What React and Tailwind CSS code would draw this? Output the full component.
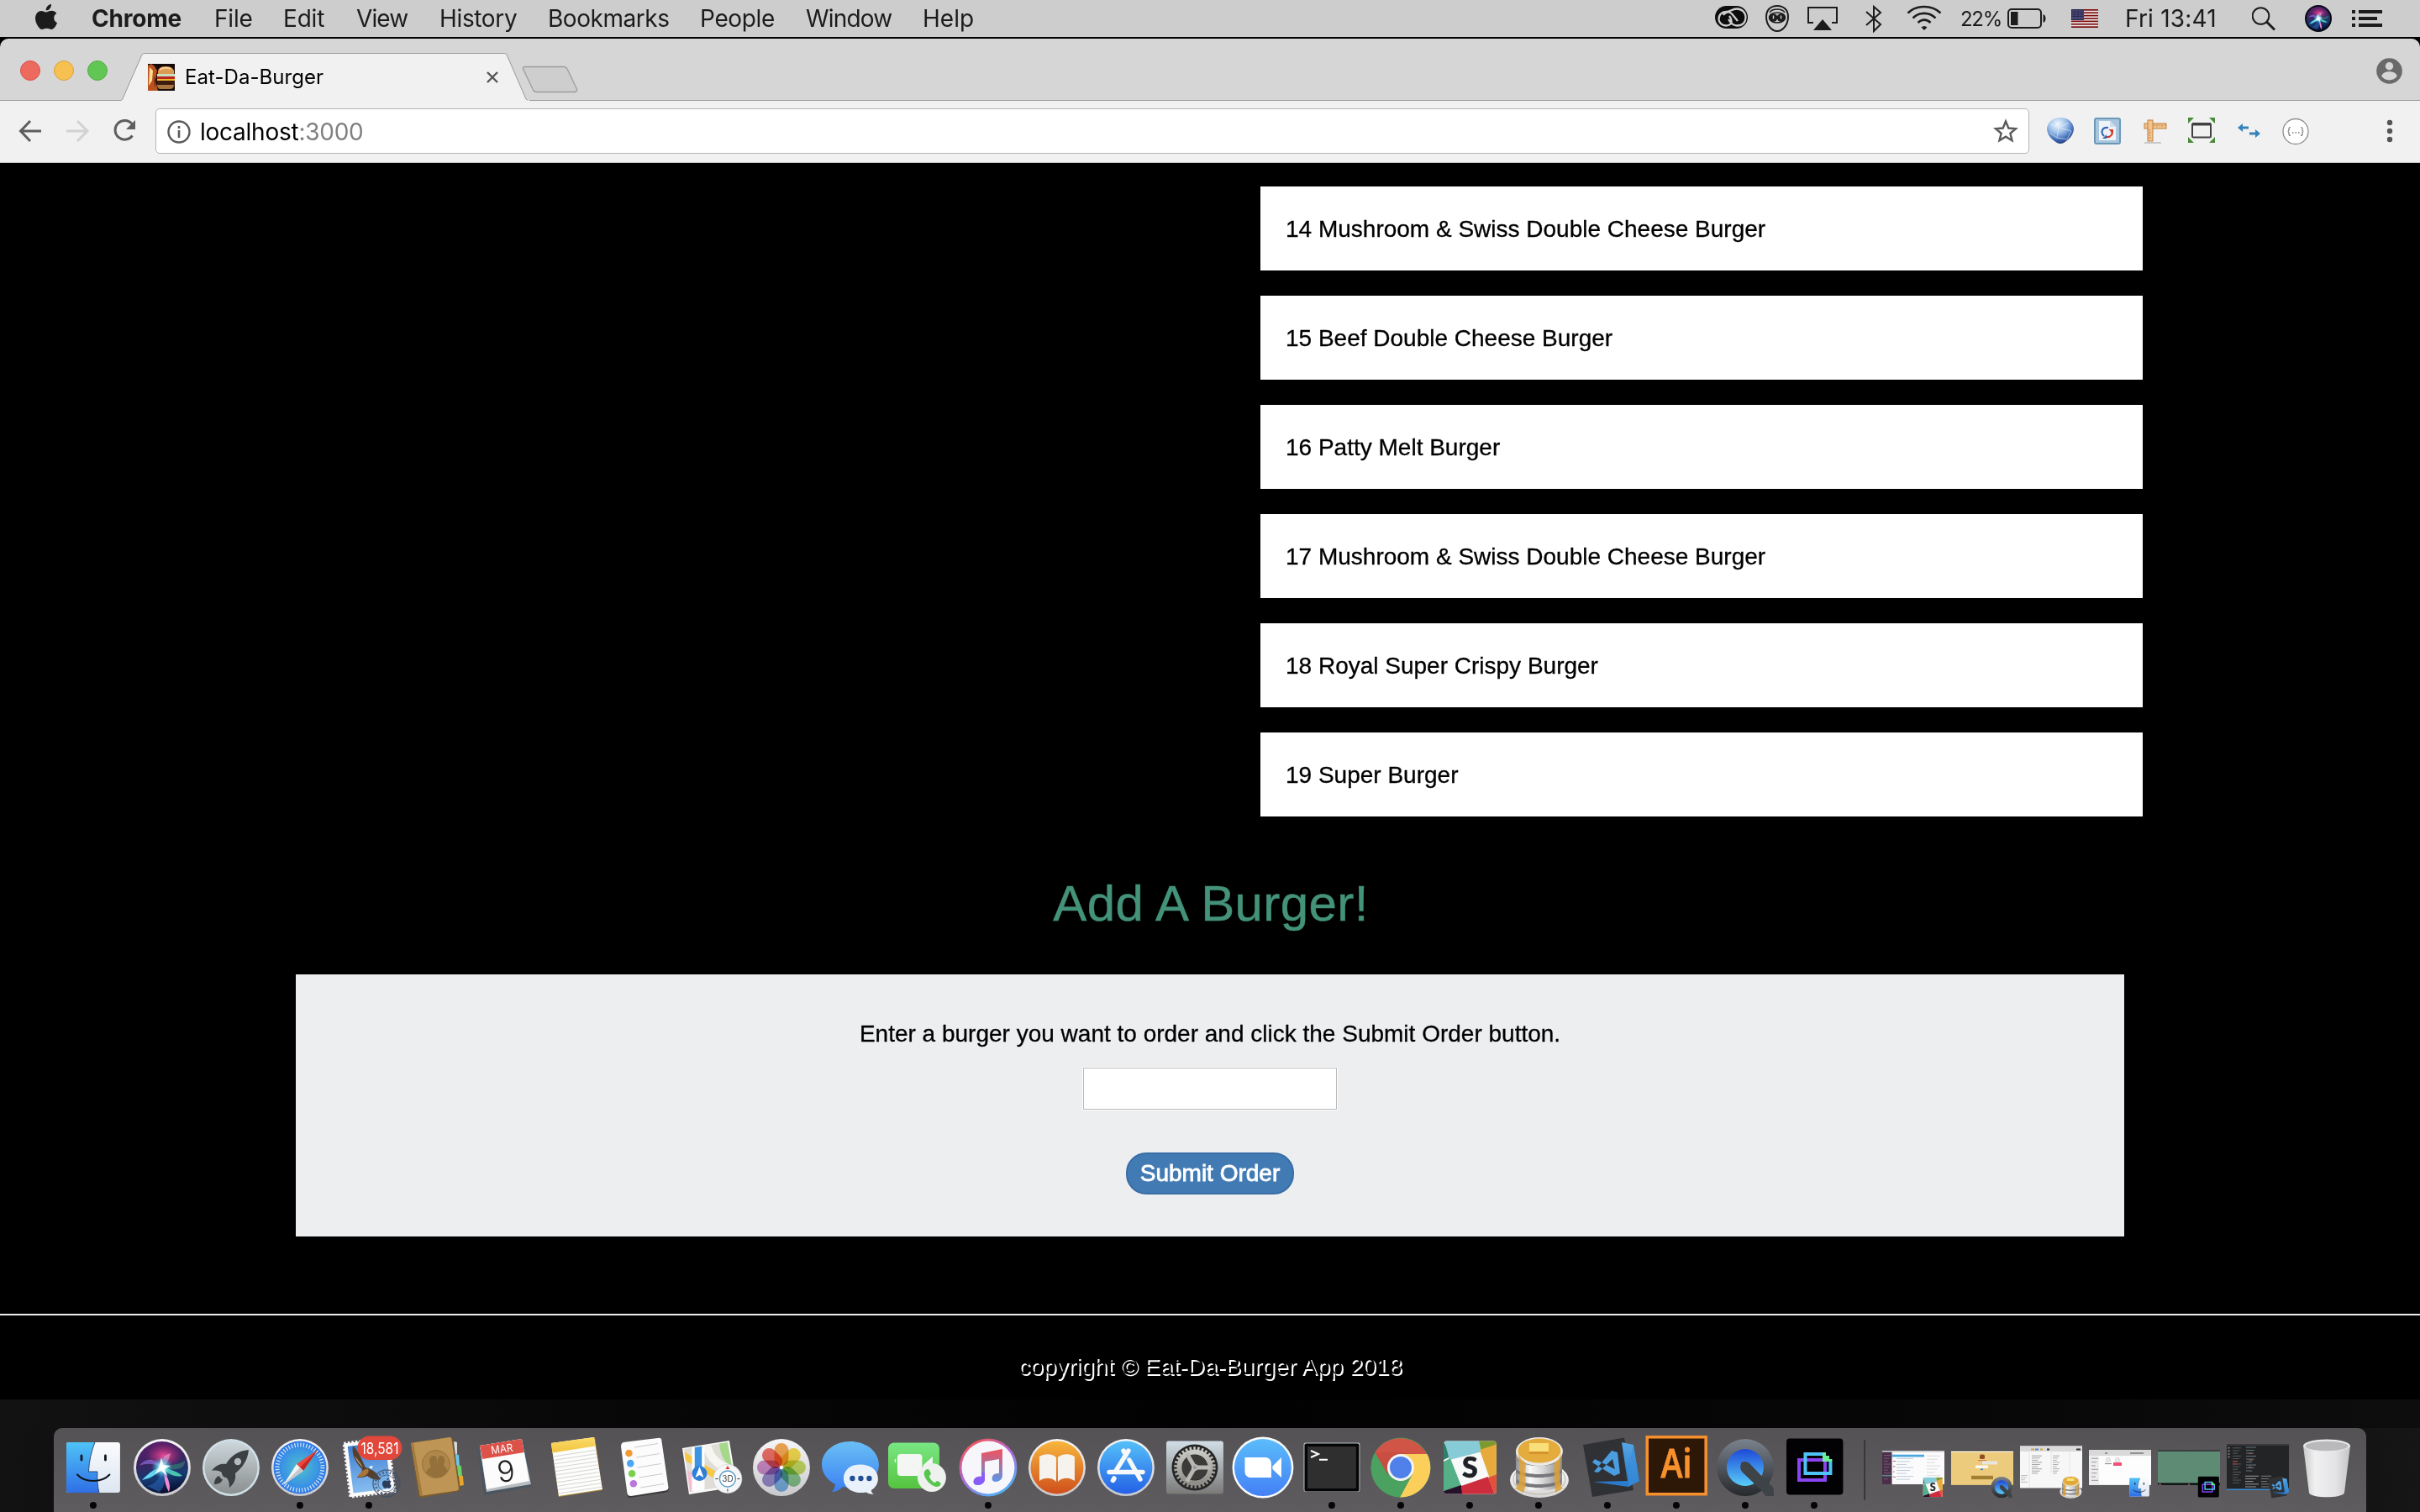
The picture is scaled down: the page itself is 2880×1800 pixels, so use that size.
import React from "react";

const menuItems = [
  ["Chrome", "w-[146px] font-bold tracking-[-0.2px]"],
  ["File", "w-[82px] tracking-[-0.2px]"],
  ["Edit", "w-[87px] tracking-[-0.2px]"],
  ["View", "w-[99px] tracking-[-0.9px]"],
  ["History", "w-[129px] tracking-[-0.35px]"],
  ["Bookmarks", "w-[181px] tracking-[-0.45px]"],
  ["People", "w-[126px] tracking-[-0.35px]"],
  ["Window", "w-[139px] tracking-[-0.8px]"],
  ["Help", "w-[60px]"],
];

const burgers = [
  "14 Mushroom & Swiss Double Cheese Burger",
  "15 Beef Double Cheese Burger",
  "16 Patty Melt Burger",
  "17 Mushroom & Swiss Double Cheese Burger",
  "18 Royal Super Crispy Burger",
  "19 Super Burger",
];

const Stop = ({ at, c, o = 1 }) => <stop offset={at} stopColor={c} stopOpacity={o} />;

/* Gradients shared by the icons */
function Defs() {
  const v = (id, a, b) => (
    <linearGradient id={id} x1="0" y1="0" x2="0" y2="1">
      <Stop at="0" c={a} />
      <Stop at="1" c={b} />
    </linearGradient>
  );
  return (
    <svg className="absolute h-0 w-0" aria-hidden="true">
      <defs>
        {v("ring", "#f6f6f8", "#c9c9cd")}
        {v("finderL", "#4fc3f7", "#2f6fe6")}
        {v("finderR", "#fafbfd", "#dde6f2")}
        {v("launch", "#cdd8dc", "#8a8f8f")}
        {v("sky", "#3f7ed0", "#86bdf0")}
        {v("books", "#f8b63c", "#cf4f1c")}
        {v("store", "#55c0f8", "#2460e6")}
        {v("zoomg", "#5bbcfa", "#4480f6")}
        {v("msg", "#6abff5", "#3a80f3")}
        {v("face", "#79e783", "#55c43f")}
        {v("prefs", "#d2dee6", "#7a7a78")}
        {v("gear", "#c9c9c5", "#8f8d88")}
        {v("musicNote", "#f4505c", "#4a9df6")}
        {v("vs", "#55a8e6", "#2573c4")}
        {v("qtRing", "#7a828d", "#26292c")}
        {v("qtBlue", "#1e49d8", "#59cdf9")}
        {v("notesTop", "#fbdc68", "#f2c340")}
        {v("plate", "#ffffff", "#d6d6d6")}
        <linearGradient id="musicRing" x1="0.2" y1="0" x2="0.8" y2="1">
          <Stop at="0" c="#f7564a" />
          <Stop at="0.45" c="#b565d8" />
          <Stop at="1" c="#43bdfb" />
        </linearGradient>
        <linearGradient id="metal" x1="0" x2="1" y1="0" y2="0">
          <Stop at="0" c="#8f8f8f" />
          <Stop at="0.3" c="#fafafa" />
          <Stop at="0.6" c="#d5d5d5" />
          <Stop at="1" c="#8a8a8a" />
        </linearGradient>
        <linearGradient id="trash" x1="0" x2="1" y1="0" y2="0">
          <Stop at="0" c="#c9c9cb" />
          <Stop at="0.25" c="#f0f0f1" />
          <Stop at="0.7" c="#e3e3e5" />
          <Stop at="1" c="#c4c4c6" />
        </linearGradient>
        <radialGradient id="safari" cx="0.5" cy="0.5" r="0.55">
          <Stop at="0" c="#4fc0c9" />
          <Stop at="0.6" c="#3b96e3" />
          <Stop at="1" c="#2c6ee8" />
        </radialGradient>
        <linearGradient id="siriBg" x1="0.3" y1="0" x2="0.5" y2="1">
          <Stop at="0" c="#5a1e6a" />
          <Stop at="0.4" c="#3a2560" />
          <Stop at="0.7" c="#153a72" />
          <Stop at="1" c="#0a0d2c" />
        </linearGradient>
        <radialGradient id="siriPink">
          <Stop at="0" c="#f04a98" />
          <Stop at="1" c="#c0287a" o={0} />
        </radialGradient>
        <radialGradient id="siriCyan">
          <Stop at="0" c="#ffffff" />
          <Stop at="0.4" c="#7fe6f5" o={0.8} />
          <Stop at="1" c="#2a9ad0" o={0} />
        </radialGradient>
        <radialGradient id="globe" cx="0.4" cy="0.25" r="0.75">
          <Stop at="0" c="#f2f8ff" />
          <Stop at="0.45" c="#9dbfe8" />
          <Stop at="0.8" c="#3f6cb8" />
          <Stop at="1" c="#24407f" />
        </radialGradient>
      </defs>
    </svg>
  );
}

/* ---------- Dock icons, each drawn round the centre 0,0 ---------- */

const Finder = () => (
  <g>
    <rect x="-32" y="-30" width="64" height="60" rx="3" fill="url(#finderR)" />
    <path d="M-29-30H2C-2-20-5-8-5.500 5H5C4.500 14 5 22 7 30H-29a3 3 0 0 1-3-3V-27a3 3 0 0 1 3-3Z" fill="url(#finderL)" />
    <path d="M2-30C-2-20-5-8-5.500 5H5C4.500 14 5 22 7 30" fill="none" stroke="#2b4a78" strokeWidth="1" />
    <path d="M-14-14v5M14.500-14v5" stroke="#10141c" strokeWidth="2.800" strokeLinecap="round" />
    <path d="M-19 8.500C-10 18.500 10 18.500 19.500 8.500" fill="none" stroke="#10141c" strokeWidth="2" strokeLinecap="round" />
  </g>
);

const SiriArt = () => (
  <g>
    <circle r="31" fill="url(#siriBg)" />
    <ellipse cx="2" cy="-14" rx="22" ry="15" fill="url(#siriPink)" />
    <path d="M0 0C-10-14-22-10-27-2C-18-6-8-4 0 0Z" fill="#8a6ad8" opacity=".7" />
    <path d="M-24 15C-14 4-6 1 0-1C-4 8-14 13-24 15Z" fill="#62d8f2" />
    <path d="M0 0C8-4 18-2 27-8C28 0 18 6 0 0Z" fill="#35706f" opacity=".8" />
    <path d="M0 0C10 2 20 6 24 10C16 12 6 8 0 0Z" fill="#55e0b8" opacity=".85" />
    <path d="M1 0C4 8 12 20 8 29C4 22 2 12 1 0Z" fill="#f08ad0" />
    <path d="M0 0C-2-8 0-14 10-17C8-9 6-4 0 0Z" fill="#dfa8d8" opacity=".6" />
    <path d="M-18 22C-6 20-2 10 0 0C6 14 2 26-4 29Z" fill="#2a66b8" opacity=".6" />
    <circle r="13" fill="url(#siriCyan)" />
    <path d="M-1-12L1.500-3L10 -2L3 2L6 10L-1 4L-9 8L-4 0Z" fill="#fff" opacity=".9" />
  </g>
);

const Siri = () => (
  <g>
    <circle r="34" fill="url(#ring)" />
    <SiriArt />
  </g>
);

const Launchpad = () => (
  <g>
    <circle r="34" fill="#cfe0e6" />
    <circle r="31.500" fill="url(#launch)" />
    <path d="M21-21C8-20-1-13-6-4C-13-5-19-2-23 4C-17 3-14 4-11 6C-11 9-9 12-6 12C-3 14-2 18-2 24C4 19 6 14 5 7C14 0 20-9 21-21Z" fill="#3c4043" />
    <circle cx="8" cy="-7" r="4.200" fill="#b4bcbf" />
    <path d="M-14 10C-18 11-20 15-20 20C-15 20-11 18-10 14C-12 14-13 12-14 10Z" fill="#3c4043" />
  </g>
);

const Safari = () => (
  <g>
    <circle r="34" fill="url(#ring)" />
    <circle r="31.500" fill="url(#safari)" />
    <circle r="27" fill="none" stroke="#e3f0fa" strokeWidth="5" strokeDasharray="1.100 2.434" />
    <path d="M21-21L4 4L-4-4Z" fill="#f0463c" />
    <path d="M21-21L4 4L0 0Z" fill="#c22a25" />
    <path d="M-20 21L-4-4L4 4Z" fill="#f4f4f2" />
    <path d="M-20 21L4 4L0 0Z" fill="#c6c8ca" />
  </g>
);

const Mail = () => (
  <g>
    <g transform="rotate(-7)">
      <rect x="-26" y="-32" width="53" height="64" fill="#fbfbfb" />
      <rect x="-26" y="-32" width="53" height="64" fill="none" stroke="#fbfbfb" strokeWidth="3.500" strokeDasharray="2.400 2.200" />
      <rect x="-22" y="-28" width="45" height="56" fill="url(#sky)" />
    </g>
    <path d="M-19-26C-11-18-8-8-4 0C4 2 10 6 14 14C8 16 2 13-2 10C-6 12-10 12-14 12C-10 8-8 6-8 2C-16-6-21-16-19-26Z" fill="#54402c" />
    <path d="M-17-14C-12-8-9-4-7 0C-10-2-15-8-17-14Z" fill="#b79c78" />
    <path d="M-14 11C-9 5-5 1-1 2C2 5-4 13-14 11Z" fill="#a8743a" />
    <path d="M0-1l5-1l-2 4Z" fill="#fff" />
    <g fill="none" stroke="#3e4f68" opacity=".75">
      <circle cx="21" cy="19" r="16" strokeWidth="1.500" />
      <circle cx="21" cy="19" r="10" strokeWidth="1" />
      <circle cx="21" cy="19" r="13" strokeWidth="3" strokeDasharray="2 2.300" />
    </g>
    <g transform="translate(16 13) scale(.42)" fill="#2d3e58"><AppleShape /></g>
    <rect x="-13.500" y="-37.500" width="53" height="28.500" rx="14.200" fill="#e2473c" />
    <text x="13" y="-16" textAnchor="middle" fill="#fff" className="font-['Inter',sans-serif] text-[19px]" textLength="45" lengthAdjust="spacingAndGlyphs">18,581</text>
  </g>
);

function AppleShape() {
  return (
    <g>
      <path d="M12.500 7.500C14.500 7.500 16.500 5.800 19.500 5.800C21.800 5.800 24 7 25.300 8.900C20.700 11.500 21.500 18 26 20C25 23.300 22.200 28 19.200 28C17 28 16.300 26.800 13.700 26.800C11 26.800 10.100 28 8 28C4.600 28 0 20.800 0 14.800C0 9.200 3.700 5.900 7.300 5.900C9.600 5.900 11.300 7.500 12.500 7.500Z" />
      <path d="M12.700 5.500C12.400 1.900 15.500-1.700 19-2C19.300 1.900 16.300 5.500 12.700 5.500Z" />
    </g>
  );
}

const Contacts = () => (
  <g transform="translate(-1 0)">
    <path d="M20-31l4 1v14l-2 1Z" fill="#dcdcdc" />
    <path d="M22-16l4 1l1 13h-4Z" fill="#6ec6e8" />
    <path d="M24-3l5 1l1 12h-5Z" fill="#6fd06a" />
    <path d="M26 10l5 0l1 11l-5 1Z" fill="#e8a52e" />
    <path d="M-31-28Q-31-30-29-30L16-36Q18-36 18.500-34L28 26Q28 28 26 28.500L-19 36Q-22 36-22 33Z" fill="#7d5c2c" />
    <path d="M-31-29L15-36Q17-36 17.500-34L26 25Q26 27 24 27.500L-20 34Z" fill="#bf9556" />
    <path d="M-31-29L-28-29.500L-17 33.500L-20 34Z" fill="#a47b3f" />
    <circle cx="-1" cy="-4" r="16.500" fill="#b0874a" stroke="#94703a" strokeWidth="1" />
    <path d="M-13 6C-12 2-8 1-7-1C-10-5-10-14-4-14C0-14 1-10 0-4C2-6 0-14 5-14C10-14 10-6 8-3C9 0 12 0 13 4C8 14-6 14-13 6Z" fill="#94703a" />
  </g>
);

const Calendar = () => (
  <g>
    <path d="M-34-23L22-32L31 23L-26 33Z" fill="#4a5662" />
    <path d="M-31-26L19-34L30 20L-23 29Z" fill="#b9bcc0" />
    <path d="M-31-26L19-34L28 16L-23 26Z" fill="#fcfcfc" />
    <path d="M-31-26L19-34L22-18L-28-10Z" fill="#dc5148" />
    <g transform="rotate(-8)" textAnchor="middle" className="font-['Inter',sans-serif]">
      <text x="-1.500" y="-18" fill="#fff" className="text-[13px]" textLength="26" lengthAdjust="spacingAndGlyphs">MAR</text>
      <text x="-0.500" y="17" fill="#222" fontWeight="300" className="text-[35px]">9</text>
    </g>
  </g>
);

const Notes = () => (
  <g>
    <path d="M-28-29L24-36L33 27L-19 35Z" fill="#b58f36" />
    <path d="M-28-29L23-36L33 26L-19 34Z" fill="#fdfdfb" />
    <path d="M-28-29L23-36L24.500-25.500L-26.500-17.500Z" fill="url(#notesTop)" />
    {[0, 1, 2, 3, 4, 5, 6, 7, 8, 9, 10].map((i) => (
      <path key={i} d={`M${-25.500 + i * 0.65} ${-13 + i * 4.4}l51-7.800`} stroke="#cfd0d0" strokeWidth=".9" />
    ))}
  </g>
);

const Reminders = () => (
  <g>
    <path d="M-25-27L18-34Q21-35 22 -31L30 25Q30 29 27 29.500L-16 36Q-19 36-19.500 33Z" fill="#2b2b2d" opacity=".7" />
    <path d="M-24-30L17-35Q21-36 21.500-32L29.500 23Q30 27 26 27.500L-15 34Q-19 34-19.500 31L-27-25Q-27-29-24-30Z" fill="#fcfcfd" />
    {["#f39a35", "#4aa7f0", "#7cd04c", "#b878de"].map((c, i) => (
      <g key={c}>
        <circle cx={-17.500 + i * 1.8} cy={-17 + i * 12.1} r="4.300" fill={c} />
        <path d={`M${-9 + i * 1.8} ${-12 + i * 12}l28-4.500`} stroke="#c9c9cb" strokeWidth="1" />
      </g>
    ))}
    <path d="M-11-24l28-4.500" stroke="#c9c9cb" strokeWidth="1" />
  </g>
);

const Maps = () => (
  <g>
    <path d="M-36-23L20-32L29 23L-28 32Z" fill="#fafafa" />
    <clipPath id="mapClip"><path d="M-34-22L18-30L27 21L-27 29Z" /></clipPath>
    <g clipPath="url(#mapClip)">
      <rect x="-40" y="-40" width="80" height="80" fill="#dfddd6" />
      <path d="M-36 0L-18 10L-18 34H-36Z" fill="#f2bfcf" />
      <path d="M-12-34H8C8-8 20 0 32 2V-40Z" fill="#a6d88c" />
      <path d="M-8-34C-6-10 10 2 34 4" fill="none" stroke="#f8f6f0" strokeWidth="10" />
      <path d="M-40-18L30 26" stroke="#f7c843" strokeWidth="8" />
      <path d="M-17-34V30" stroke="#fff" strokeWidth="15" />
      <path d="M-17-34V4" stroke="#3d94e0" strokeWidth="8.500" />
    </g>
    <circle cx="-15.500" cy="7" r="9" fill="#2f7fd8" />
    <path d="M-15.500-1L-10.500 12L-15.500 9L-20.500 12Z" fill="#fff" />
    <circle cx="18" cy="13.500" r="17" fill="#f4f6f7" stroke="#c9cccf" strokeWidth=".6" />
    <circle cx="18" cy="13.500" r="9.500" fill="#fff" stroke="#5b9cc4" strokeWidth="1.400" />
    <path d="M18-2l2.500 4h-5Z" fill="#e03a30" />
    <path d="M3.500 13.500h3M29.500 13.500h3M18 25.500v3" stroke="#333" strokeWidth="1" />
    <text x="18" y="17.500" textAnchor="middle" fill="#3a3f44" className="font-['Inter',sans-serif] text-[10px]">3D</text>
  </g>
);

const Photos = () => (
  <g>
    <circle r="34" fill="url(#ring)" />
    {["#f29b38", "#f3d532", "#bfd84a", "#78c27c", "#6aaee6", "#8d7fc8", "#c77cc0", "#ec5a4c"].map((c, i) => (
      <rect key={c} x="-8.500" y="-29" width="17" height="27" rx="8.500" fill={c} opacity=".86" style={{ mixBlendMode: "multiply" }} transform={`rotate(${i * 45})`} />
    ))}
    <circle r="1.800" fill="#fff" />
  </g>
);

const Messages = () => (
  <g>
    <path d="M0-31C19-31 34-19 34-3.500C34 12 19 24 0 24C-3 24-6 23.500-9 23C-12 26-16 29-22 29C-19 26-18 22-18 20C-28 15-34 6-34-3.500C-34-19-19-31 0-31Z" fill="url(#msg)" />
    <path d="M12-3.500C24-3.500 33 3 33 13.500C33 19 30 24 25 27C25 29 26 31 28 32C24 32 21 31 19 29.500C17 30 14 30 12 30C0 30-8 22-8 13.500C-8 3 0-3.500 12-3.500Z" fill="#e9f2fa" />
    <circle cx="2.500" cy="13" r="3.200" fill="#234f97" />
    <circle cx="12.500" cy="13" r="3.200" fill="#234f97" />
    <circle cx="22.500" cy="13" r="3.200" fill="#234f97" />
  </g>
);

const FaceTime = () => (
  <g>
    <rect x="-37" y="-29.500" width="61" height="54.500" rx="7" fill="url(#face)" />
    <rect x="-26" y="-16" width="29.500" height="26" rx="4" fill="#f4f6f4" />
    <path d="M5-3L16-13V8L5 2Z" fill="#f4f6f4" />
    <path d="M-28.500-10v4" stroke="#f4f6f4" strokeWidth="1.500" />
    <circle cx="15" cy="12" r="17" fill="#eef1ee" />
    <path d="M6 5C8 2 10 1 12 3L14 7C14 9 12 9 12 11C13 14 16 17 18 18C20 18 20 16 22 16L25 18C27 20 25 22 22 23C16 24 4 13 6 5Z" fill="#57c64f" />
  </g>
);

const ITunes = () => (
  <g>
    <circle r="34.500" fill="url(#musicRing)" />
    <circle r="31.500" fill="#f7f7fb" />
    <path d="M-8-17L17-22V10C17 14 13 17 9 17C5 17 4 14 5 11C6 8 9 7 13 7V-10L-4-7V14C-4 18-8 21-12 21C-17 21-18 18-17 15C-16 12-12 10-8 11Z" fill="url(#musicNote)" />
    <path d="M-8 11C-12 10-16 12-17 15C-18 18-17 21-12 21C-8 21-4 18-4 14V6H-8Z" fill="#8a5cf6" />
  </g>
);

const IBooks = () => (
  <g>
    <circle r="34" fill="url(#ring)" />
    <circle r="31.500" fill="url(#books)" />
    <path d="M-1-12C-5-17-16-17-21-13V16C-15 11-5 12-1 17ZM1-12C5-17 16-17 21-13V16C15 11 5 12 1 17Z" fill="#f6f3ef" />
  </g>
);

const AppStore = () => (
  <g>
    <circle r="34" fill="url(#ring)" />
    <circle r="31.500" fill="url(#store)" />
    <g stroke="#f6f8fa" strokeWidth="5.500" strokeLinecap="round" fill="none">
      <path d="M-20 5.500H20" />
      <path d="M3-20L-12 4" />
      <path d="M-3-20L0-15M4-9L17 14" />
      <path d="M-14 13L-15.500 15.500" />
    </g>
  </g>
);

const Prefs = () => (
  <g>
    <rect x="-34" y="-31.500" width="68" height="63" rx="3" fill="url(#prefs)" />
    <circle r="27.500" fill="#262626" />
    <circle r="22.800" fill="none" stroke="url(#gear)" strokeWidth="4" strokeDasharray="2.600 2.175" />
    <circle r="18.500" fill="none" stroke="url(#gear)" strokeWidth="6" />
    <circle r="15" fill="#3c3b3a" />
    {[0, 120, 240].map((a) => (
      <rect key={a} x="0" y="-2.500" width="19" height="5" fill="#b9b7b2" transform={`rotate(${a})`} />
    ))}
    <circle r="4" fill="#b9b7b2" />
    <circle r="2" fill="#8b97a4" />
  </g>
);

const Zoom = () => (
  <g>
    <circle r="36.500" fill="#f8fafc" />
    <circle r="34" fill="url(#zoomg)" />
    <path d="M-21.500-12H3a7 7 0 0 1 7 7V12H-15a6.500 6.500 0 0 1-6.500-6.500Z" fill="#fff" />
    <path d="M11.500-1.500L22-12V12L11.500 2Z" fill="#fff" />
  </g>
);

const Terminal = () => (
  <g>
    <rect x="-33.500" y="-29.500" width="67" height="58.500" rx="2.500" fill="#b5c0c4" />
    <rect x="-32.500" y="-28.500" width="65" height="57" rx="2" fill="#050505" />
    <rect x="-29" y="-25" width="58" height="50" fill="#2f2f2f" />
    <path d="M-25-20L-16-16L-25-12M-15-9.200H-5" fill="none" stroke="#fff" strokeWidth="2" />
  </g>
);

const Chrome = () => (
  <g>
    <circle r="35.500" fill="#4aa160" />
    <path d="M0 0L-30.700-17.800A35.500 35.500 0 0 1 31-16H0Z" fill="#d15546" />
    <path d="M0-16H31.600A35.500 35.500 0 0 1-1 35.500L14 8Z" fill="#fbcf5a" />
    <path d="M-30.700-17.800L-14 8L0 16L14 8L-1 35.500A35.500 35.500 0 0 1-30.700-17.800Z" fill="#4aa160" />
    <path d="M-30.700-17.800L-15 9L-13-4L0-16H20L0-18Z" fill="#c94d40" />
    <circle r="16" fill="#f4f4f2" />
    <circle r="13" fill="#5081ea" />
  </g>
);

const Slack = () => (
  <g>
    <clipPath id="slackClip"><rect x="-31" y="-31.500" width="63" height="63" rx="4" /></clipPath>
    <g clipPath="url(#slackClip)">
      <rect x="-31" y="-32" width="64" height="64" fill="#f8f9f8" />
      <path d="M-31-32L-23-13L-31-9Z" fill="#2f7f6a" />
      <path d="M-30-32H11L15-19L-24-9Z" fill="#86cbd6" />
      <path d="M11-32H33V-27L14-19Z" fill="#7f9a2c" />
      <path d="M12-21L33-28V8L25 16Z" fill="#e6ab3c" />
      <path d="M-31-7L-23-11L-10 22L-31 28Z" fill="#55b088" />
      <path d="M-31 28L-10 21L-8 32H-31Z" fill="#26112a" />
      <path d="M-10 22L22 11L30 32H-9Z" fill="#cd2c3d" />
      <path d="M22 12L33 8V32H30Z" fill="#e0523a" />
    </g>
    <text x="0.500" y="11.500" textAnchor="middle" fill="#1e2126" stroke="#1e2126" strokeWidth=".6" className="font-['Lato',sans-serif] text-[34px] font-black">S</text>
  </g>
);

const SequelPro = () => (
  <g>
    <ellipse cx="1" cy="15" rx="35" ry="21" fill="url(#plate)" />
    <ellipse cx="1" cy="14" rx="31" ry="18" fill="none" stroke="#b9b2a2" strokeWidth="1" />
    <path d="M-27-20V20C-20 30 22 30 28 20V-20Z" fill="url(#metal)" />
    <path d="M-27 2C-15 10 16 10 28 2V6C16 14-15 14-27 6ZM-26 14C-15 22 16 22 27 14V18C16 26-15 26-26 18Z" fill="#77787c" />
    <path d="M-27-10C-15 0 16 0 28-10" fill="none" stroke="#8a8a8a" strokeWidth="1.500" />
    <ellipse cx="1" cy="-19" rx="28" ry="17" fill="#eceae6" />
    <ellipse cx="1" cy="-20" rx="25.500" ry="14.500" fill="#e3ac3c" />
    <path d="M-24-18C-20-4-16-10-15-4C-17 10-13 20-18 30L-28 25C-20 20-22 8-24-18ZM27-18C24-4 20-10 19-4C18 10 20 20 20 30L29 25C24 20 25 8 27-18Z" fill="#dda136" opacity=".85" />
    <path d="M-11-29H12V-19H-11Z" fill="#f8df7a" />
    <path d="M-11-19H12V-16H-11Z" fill="#d6952a" />
  </g>
);

const VSCode = () => (
  <g>
    <path d="M-29-27L20-35.500L31 27L-18 35Z" fill="#303134" />
    <path d="M17-30L31-27L38 16L25 23Z" fill="url(#vs)" />
    <path d="M-17 17L25 16L25 23Z" fill="#2a7bcc" />
    <path d="M25 23L38 16L31-27L25 0Z" fill="#3a8fdc" opacity=".7" />
    <path d="M5-20L12-18L15 7L8 10L-18-6L-15-10L9 2L6-10L-11 6L-16 5Z" fill="#4a9ee0" fillRule="evenodd" />
  </g>
);

const Illustrator = () => (
  <g>
    <rect x="-36.500" y="-38" width="73.500" height="71.500" fill="#f7912d" />
    <rect x="-33" y="-34.500" width="66.500" height="64.500" fill="#2d1706" />
    <text x="0" y="12" textAnchor="middle" fill="#f7912d" stroke="#f7912d" strokeWidth=".8" className="font-['Open_Sans',sans-serif] text-[47px] font-semibold" textLength="37" lengthAdjust="spacingAndGlyphs">Ai</text>
  </g>
);

const QuickTime = () => (
  <g>
    <circle r="34" fill="url(#qtRing)" />
    <circle r="22" fill="url(#qtBlue)" />
    <path d="M-5-4Q-6-7 0-7Q3-7 5-5L29 20Q34 22 34 28V34H24Q22 30 20 28L-4 5Q-7 1-5-4Z" fill="#3e4347" />
  </g>
);

const Clipper = () => (
  <g>
    <rect x="-33" y="-34.500" width="67.500" height="67" rx="4" fill="#020204" />
    <rect x="-18" y="-9" width="31" height="24" fill="none" stroke="#8a45f2" strokeWidth="4" />
    <path d="M11-16H-10.500V7H19.500V-7" fill="none" stroke="#4fc3f5" strokeWidth="4" />
    <path d="M10-18H14V-14H18V-10H21.500V-7H10Z" fill="#6bf09a" />
  </g>
);

const dock = [
  [Finder, true], [Siri, false], [Launchpad, false], [Safari, true], [Mail, true],
  [Contacts, false], [Calendar, false], [Notes, false], [Reminders, false], [Maps, false],
  [Photos, false], [Messages, false], [FaceTime, false], [ITunes, true], [IBooks, false],
  [AppStore, false], [Prefs, false], [Zoom, false], [Terminal, true], [Chrome, true],
  [Slack, true], [SequelPro, true], [VSCode, true], [Illustrator, true], [QuickTime, true],
  [Clipper, true],
];

/* ---------- Minimised windows ---------- */

const rows = (n, x, y, w, step, c) =>
  Array.from({ length: n }, (_, i) => (
    <path key={`${x}-${y}-${i}`} d={`M${x} ${y + i * step}h${w - (i % 3) * w * 0.2}`} stroke={c} strokeWidth="1" />
  ));

const SlackWindow = () => (
  <g>
    <rect x="-37" y="-20" width="74" height="51" fill="#fbfbfc" />
    <rect x="-37" y="-20" width="74" height="2" fill="#c8c8c8" />
    <rect x="-37" y="-18" width="11.500" height="49" fill="#4b2f49" />
    <rect x="-37" y="17" width="11.500" height="1.500" fill="#4f9d87" />
    {rows(9, -35, -13, 8, 4.5, "#79617a")}
    <rect x="-25" y="-14" width="38" height="3.500" fill="#4aa8de" />
    {rows(8, -20, -8, 20, 4.5, "#b7c6d8")}
    {rows(7, 16, -12, 16, 5, "#d5d5d5")}
    {rows(4, -24, -4, 3, 8, "#a05a58")}
  </g>
);
const MovieWindow = () => (
  <g>
    <rect x="-37" y="-21" width="74" height="53" fill="#edcb7c" />
    <rect x="-37" y="-21" width="74" height="2" fill="#3b3b3b" />
    <rect x="-37" y="-19" width="74" height="1.500" fill="#f2f2f2" />
    <rect x="-3" y="-14" width="6" height="7" rx="2" fill="#8f4f22" />
    <path d="M-5-5h10" stroke="#d8663a" strokeWidth="1" />
    <rect x="0" y="-4" width="18" height="5" fill="#e9e6e2" />
    <rect x="-8" y="2.500" width="15" height="4" fill="#fbfbf6" />
    <rect x="-2" y="7.500" width="3" height="2" fill="#3b7dc4" />
    <rect x="-13" y="18" width="26" height="5.500" fill="#a37f34" />
  </g>
);
const TableWindow = () => (
  <g>
    <rect x="-37" y="-25.500" width="74" height="62" fill="#f7f7f7" />
    <rect x="-37" y="-25.500" width="74" height="8" fill="#dadada" />
    <path d="M-24-20.500h4M-13-20.500h3" stroke="#d0a54a" strokeWidth="2.500" />
    <path d="M-19-20.500h4" stroke="#4a8fd8" strokeWidth="2.500" />
    <path d="M-5-20.500h3M30-20.500h5" stroke="#333" strokeWidth="2.500" />
    {rows(9, -23, -11, 12, 3.2, "#9a9a9a")}
    {rows(9, 2, -11, 8, 3.2, "#a5a5a5")}
    {rows(4, -36, 18, 8, 3.2, "#b5b5b5")}
    <path d="M-26-17V36M0-17V14M22-17V14" stroke="#dcdcdc" strokeWidth=".8" />
  </g>
);
const FinderWindow = () => (
  <g>
    <rect x="-37" y="-21" width="74" height="53" fill="#fdfdfd" />
    <rect x="-37" y="-21" width="74" height="9" fill="#d9d9d9" />
    <path d="M-18-16h3M12-16h16" stroke="#777" strokeWidth="2" />
    <rect x="-37" y="-12" width="12" height="44" fill="#ececec" />
    {rows(7, -34, -8, 8, 5.5, "#909090")}
    <path d="M-16-9h4l1 6h-6ZM-5-9h4l1 6h-6Z" fill="#e8e8e8" stroke="#c9c9c9" strokeWidth=".5" />
    <path d="M-18 0h8" stroke="#777" />
    <rect x="-8" y="-2" width="10" height="5" fill="#ee5078" />
  </g>
);
const GreenWindow = () => (
  <g>
    <rect x="-37" y="-21" width="74" height="53" fill="#5d8b74" />
    <rect x="-37" y="-21" width="74" height="2.500" fill="#3b403e" />
    <rect x="-37" y="29" width="74" height="3" fill="#0c0c0c" />
    <path d="M-36 31h3M-1 31h2" stroke="#d88" />
  </g>
);
const CodeWindow = () => (
  <g>
    <rect x="-37" y="-28" width="74" height="69" fill="#232426" />
    <rect x="-37" y="-28" width="74" height="2.500" fill="#3a3a3c" />
    <path d="M-34.500-23V-6" stroke="#8d8d8d" strokeWidth="2" strokeDasharray="2 2.500" />
    {rows(14, -30, -22, 10, 4, "#5c5f63")}
    <path d="M-30-2h6M-30 2h5" stroke="#b8483e" strokeWidth="1" />
    {rows(9, -14, -23, 12, 4.4, "#6a7f88")}
    {rows(3, -11, -14, 6, 10, "#a86a52")}
    {rows(5, -15, 20, 16, 4, "#a5a5a5")}
    {rows(5, 4, 20, 12, 4, "#8a8a8a")}
    <rect x="-37" y="39" width="74" height="2" fill="#3d8ad0" />
  </g>
);

/* window, app badge, top edge, vertical squeeze */
const windows = [
  [SlackWindow, Slack, -20, 0.784],
  [MovieWindow, QuickTime, -21, 0.79],
  [TableWindow, SequelPro, -25.5, 0.806],
  [FinderWindow, Finder, -21, 0.79],
  [GreenWindow, Clipper, -21, 0.79],
  [CodeWindow, VSCode, -28, 0.797],
];

function Dock() {
  return (
    <div className="mx-[64px] flex h-[100px] shrink-0 rounded-t-[10px] bg-linear-to-b from-[#545255] to-[#5e5c5f] pl-[6px]">
      {dock.map(([Icon, running], i) => (
        <svg key={i} className="h-[100px] w-[81.920px] shrink-0 overflow-visible" viewBox="-41 -47 82 100">
          <Icon />
          {running && <circle cx="0" cy="45" r="4" fill="#050505" />}
        </svg>
      ))}
      <div className="ml-[18px] mt-[14px] h-[72px] w-[2px] bg-[#38373a]" />
      <div className="w-[16px]" />
      {windows.map(([Win, Badge, top, squeeze], i) => (
        <svg key={i} className="h-[100px] w-[82px] shrink-0" viewBox="-41 -47 82 100">
          <g transform={`translate(0 ${top}) scale(1 ${squeeze}) translate(0 ${-top})`}><Win /></g>
          <g transform="translate(23 23.500) scale(.37)"><Badge /></g>
        </svg>
      ))}
      <svg className="h-[100px] w-[82px] shrink-0" viewBox="-41 -47 82 100">
        <path d="M-28-26L-21 30C-20 37 20 37 21 30L28-26Z" fill="url(#trash)" />
        <ellipse cx="0" cy="-26" rx="28" ry="7.500" fill="#e8e8ea" />
        <ellipse cx="0" cy="-25.500" rx="25.500" ry="5.800" fill="#b9b9bb" />
      </svg>
    </div>
  );
}

/* ---------- Menu bar ---------- */

function MenuBar() {
  return (
    <div className="flex h-[44px] shrink-0 items-center bg-[#cdcdcd] font-['Inter',sans-serif] text-[28px] leading-[44px] text-[#1c1c1c]">
      <svg className="mb-[4px] ml-[42px] h-[32px] w-[26px] shrink-0 overflow-visible" viewBox="0 -3 26 32" fill="#1c1c1c">
        <AppleShape />
      </svg>
      <div className="ml-[41px] flex whitespace-nowrap">
        {menuItems.map(([t, c]) => (
          <span key={t} className={c}>{t}</span>
        ))}
      </div>
      <svg className="ml-auto h-[44px] w-[39px] shrink-0" viewBox="0 0 39 44">
        <rect x="0" y="7" width="39" height="27" rx="13.500" fill="#0d0d0d" />
        <path d="M26 30.500C34 30.500 36.500 25.500 36.500 20.500C36.500 15 32 10.500 26 10.500C20 10.500 18 14 13.500 14C9 14 4.500 17 4.500 22.500C4.500 27 8 30.500 13 30.500C19 30.500 22 26 17 19M27 25L20.500 17C17 13 12 14 10 18M26 30.500C21 30.500 19 27 16 23" fill="none" stroke="#cdcdcd" strokeWidth="2.300" />
      </svg>
      <svg className="ml-[21px] h-[44px] w-[28px] shrink-0" viewBox="0 0 28 44" fill="none" stroke="#1c1c1c" strokeWidth="2">
        <path d="M14 7C22 7 27 12 27 20C27 29 21 37 14 37C7 37 1 29 1 20C1 12 6 7 14 7Z" />
        <path d="M5 15C7 11.500 10 11 14 11C18 11 21 11.500 23 15" strokeWidth="1.500" />
        <circle cx="9.500" cy="21" r="4.800" fill="#1c1c1c" stroke="none" />
        <circle cx="18.500" cy="21" r="4.800" fill="#1c1c1c" stroke="none" />
        <path d="M4.500 21C5 13 23 13 23.500 21C23 29 5 29 4.500 21Z" strokeWidth="1.500" />
        <path d="M9.500 18.500v4M18.500 18.500v4" stroke="#cdcdcd" strokeWidth="1.500" />
      </svg>
      <svg className="ml-[22px] h-[44px] w-[36px] shrink-0" viewBox="0 0 36 44">
        <path d="M7 27H1V9H35V27H29" fill="none" stroke="#1c1c1c" strokeWidth="2" />
        <path d="M18 23L29 36H7Z" fill="#1c1c1c" />
      </svg>
      <svg className="ml-[33px] h-[44px] w-[20px] shrink-0" viewBox="0 0 20 44">
        <path d="M1 14L18 29L10 37V8L18 15L1 30" fill="none" stroke="#1c1c1c" strokeWidth="2" />
      </svg>
      <svg className="ml-[29px] h-[44px] w-[42px] shrink-0" viewBox="0 0 42 44" fill="none" stroke="#1c1c1c" strokeWidth="2.600">
        <path d="M1.500 15.500C12 5.500 30 5.500 40.500 15.500" />
        <path d="M7.500 21.500C15 14 27 14 34.500 21.500" />
        <path d="M13.500 27C18 22.500 24 22.500 28.500 27" />
        <path d="M21 36L17.500 32.500Q21 29.500 24.500 32.500Z" fill="#1c1c1c" stroke="none" />
      </svg>
      <span className="ml-[22px] w-[56px] text-[24px] leading-[43px] tracking-[-1.300px]">22%</span>
      <svg className="h-[44px] w-[46px] shrink-0" viewBox="0 0 46 44">
        <rect x="1" y="11" width="39" height="22" rx="4" fill="none" stroke="#1c1c1c" strokeWidth="2" />
        <rect x="4" y="14" width="8.500" height="16" fill="#1c1c1c" />
        <path d="M42.500 17Q45.500 18 45.500 22Q45.500 26 42.500 27Z" fill="#1c1c1c" />
      </svg>
      <svg className="ml-[30px] h-[44px] w-[32px] shrink-0" viewBox="0 0 32 44">
        <rect y="11" width="32" height="22" fill="#ececec" />
        {[0, 2, 4, 6, 8, 10, 12].map((i) => (
          <rect key={i} y={11 + i * 1.692} width="32" height="1.692" fill="#7c0a0c" />
        ))}
        <rect y="11" width="15" height="13" fill="#262451" />
        {[13, 15.500, 18, 20.500, 22.500].map((y) => (
          <path key={y} d={`M1.500 ${y}h13`} stroke="#a9a9c4" strokeWidth="1" strokeDasharray="1 1.400" />
        ))}
      </svg>
      <span className="ml-[32px] w-[115px] whitespace-nowrap tracking-[0.200px]">Fri 13:41</span>
      <svg className="ml-[36px] h-[44px] w-[30px] shrink-0" viewBox="0 0 30 44" fill="none" stroke="#1c1c1c">
        <circle cx="10.500" cy="19" r="9.800" strokeWidth="2" />
        <path d="M17.500 26L27 35.500" strokeWidth="3" />
      </svg>
      <svg className="ml-[32px] h-[44px] w-[34px] shrink-0" viewBox="0 0 34 44">
        <circle cx="17" cy="22" r="16" fill="#080a18" />
        <g transform="translate(17 22) scale(.45)"><SiriArt /></g>
      </svg>
      <svg className="ml-[22px] mr-[45px] h-[44px] w-[37px] shrink-0" viewBox="0 0 37 44" fill="#1c1c1c">
        <path d="M1 12h4v4h-4ZM9 12h28v4H9ZM1 20h4v4h-4ZM9 20h22v4H9ZM1 28h4v4h-4ZM9 28h28v4H9Z" />
      </svg>
    </div>
  );
}

/* ---------- Browser chrome ---------- */

function TabStrip() {
  return (
    <div className="h-[74px] shrink-0 bg-black">
      <div className="flex h-[74px] items-start rounded-t-[10px] border-b border-[#999] bg-[#d6d6d6]">
        <div className="ml-[24px] mt-[26px] flex w-[120px] gap-[16px]">
          <span className="h-[24px] w-[24px] rounded-full border border-[#db4f48] bg-[#ed6a5f]" />
          <span className="h-[24px] w-[24px] rounded-full border border-[#dca23a] bg-[#f6c150]" />
          <span className="h-[24px] w-[24px] rounded-full border border-[#4fae42] bg-[#62c655]" />
        </div>
        <div className="relative mt-[16px] flex h-[58px] w-[486px]">
          <svg className="absolute left-0 top-0 h-[58px] w-[486px]" viewBox="0 0 486 58">
            <path d="M0 58V57L1.500 56.500L25 3Q26 1.500 28 1.500H456Q458 1.500 459 3L482 56L486 57.500V58Z" fill="#f1f1f1" />
            <path d="M0 57.500L1.500 56.500L25 3Q26 1.500 28 1.500H456Q458 1.500 459 3L482 56L484 57.500" fill="none" stroke="#999" />
          </svg>
          <div className="relative flex w-full items-center pb-[2px] pl-[32px] pt-[4px]">
            <svg className="h-[32px] w-[32px] shrink-0" viewBox="0 0 32 32">
              <rect width="32" height="32" fill="#150a08" />
              <path d="M0 2L4 0L8 3L11 8L9 20L12 32H0Z" fill="#b8521e" />
              <path d="M2 4L6 8L5 20L1 26Z" fill="#fbdc92" />
              <path d="M7 14L10 22L8 28Z" fill="#7a2214" />
              <path d="M12 12C11 6 15 3 21 3C28 3 32 6 31 12Z" fill="#dd9a52" />
              <path d="M14 7Q20 3 27 6" stroke="#f5cf98" strokeWidth="2" fill="none" />
              <path d="M11 12H32V16H11Z" fill="#c8dfc0" />
              <path d="M11 15H32V18H11Z" fill="#b8281e" />
              <path d="M11 18H32V20H11Z" fill="#f0b52c" />
              <path d="M11 20H32V25H11Z" fill="#3c1c10" />
              <path d="M11 25H31Q31 30 26 30H15Q11 30 11 25Z" fill="#a87440" />
            </svg>
            <span className="ml-[12px] whitespace-nowrap font-['Inter',sans-serif] text-[24px] leading-[32px] tracking-[0.050px] text-black">Eat-Da-Burger</span>
            <svg className="ml-auto mr-[35px] h-[18px] w-[18px] shrink-0" viewBox="0 0 18 18">
              <path d="M3 3L15 15M15 3L3 15" stroke="#555" strokeWidth="2.400" />
            </svg>
          </div>
        </div>
        <svg className="ml-[-9px] mt-[32px] h-[34px] w-[68px]" viewBox="0 0 68 34">
          <path d="M3 1.500H50Q53 1.500 54 4L65.500 28Q66 31 63 31.500H18Q14.500 31.500 13.500 29L1.500 4Q1 2 3 1.500Z" fill="#cecece" stroke="#9d9d9d" strokeWidth="1.300" />
        </svg>
        <svg className="ml-auto mr-[21px] mt-[23px] h-[31px] w-[31px]" viewBox="0 0 31 31">
          <circle cx="15.500" cy="15.500" r="15.300" fill="#6a6a6a" />
          <circle cx="15.500" cy="9.800" r="4.700" fill="#d6d6d6" />
          <path d="M6.200 21.500C8 14.500 23 14.500 24.800 21.500C20.500 28 10.500 28 6.200 21.500Z" fill="#d6d6d6" />
        </svg>
      </div>
    </div>
  );
}

function Toolbar() {
  return (
    <div className="flex h-[74px] shrink-0 border-b border-[#c6c6c6] bg-[#f1f1f1]">
      <div className="flex w-[185px] pt-[22px]">
        <svg className="ml-[22px] h-[28px] w-[28px]" viewBox="0 0 28 28" fill="none" stroke="#5e5e5e" strokeWidth="3">
          <path d="M27 14H3M14 2L2.500 14L14 26" />
        </svg>
        <svg className="ml-[29px] h-[28px] w-[28px]" viewBox="0 0 28 28" fill="none" stroke="#d2d2d2" strokeWidth="3">
          <path d="M0 14H24M13 2L25 14L13 26" />
        </svg>
        <svg className="ml-[26px] h-[28px] w-[29px]" viewBox="0 0 29 28">
          <path d="M24 5.500A11.300 11.300 0 1 0 24.500 19.500" fill="none" stroke="#5e5e5e" strokeWidth="3" />
          <path d="M28 1V12H17Z" fill="#5e5e5e" />
        </svg>
      </div>
      <div className="mt-[9px] flex h-[54px] w-[2230px] items-center rounded-[5px] border border-[#b5b5b5] bg-white">
        <svg className="ml-[13px] mt-[2px] h-[28px] w-[28px]" viewBox="0 0 28 28">
          <circle cx="14" cy="14" r="12.500" fill="none" stroke="#5a5a5a" strokeWidth="2.400" />
          <path d="M14 12v9M14 7v3" stroke="#5a5a5a" strokeWidth="2.600" />
        </svg>
        <span className="ml-[11px] mt-[2px] whitespace-nowrap font-['Inter',sans-serif] text-[28px] leading-[52px] tracking-[-0.250px] text-black">
          localhost<span className="text-[#808080]">:3000</span>
        </span>
        <svg className="ml-auto mr-[12px] h-[30px] w-[30px]" viewBox="0 0 30 30">
          <path d="M15 3.500L18.300 11.500L27 12.200L20.400 17.800L22.500 26.300L15 21.700L7.500 26.300L9.600 17.800L3 12.200L11.700 11.500Z" fill="none" stroke="#5a5a5a" strokeWidth="2.400" />
        </svg>
      </div>
      <div className="flex pt-[20px]">
        <svg className="ml-[21px] h-[32px] w-[32px]" viewBox="0 0 32 32">
          <path d="M16 0C25 0 32 6 32 14C31 22 26 26 20 30Q16 32 12 30C6 26 1 22 0 14C0 6 7 0 16 0Z" fill="url(#globe)" />
          <path d="M4 8L14 12L12 24L3 18M14 12L26 6M12 24L24 26L29 16L14 12" fill="none" stroke="#e6f1fc" strokeWidth="1" opacity=".6" />
        </svg>
        <svg className="ml-[24px] h-[32px] w-[32px]" viewBox="0 0 32 32">
          <rect x="1" y="1" width="30" height="30" rx="2" fill="#a8c6de" stroke="#6c98b8" strokeWidth="2" />
          <path d="M6 4H19L26 11V27H6Z" fill="#eef3fa" />
          <path d="M19 4V11H26Z" fill="#cddcec" />
          <path d="M12 22C7 17 10 11 17 12" fill="none" stroke="#3a68b4" strokeWidth="2.200" />
          <path d="M20 15C24 19 20 24 14 23" fill="none" stroke="#d6392c" strokeWidth="2.200" />
          <path d="M17 14h6v4Z" fill="#d6392c" />
          <path d="M15 20v5h-5Z" fill="#3a68b4" />
        </svg>
        <svg className="ml-[26px] h-[32px] w-[30px]" viewBox="0 0 30 32">
          <path d="M2 30H22" stroke="#c9c9c9" strokeWidth="2" />
          <rect x="2" y="7" width="26" height="6" fill="#f2c48c" stroke="#c08040" strokeWidth="1" />
          <rect x="6" y="3" width="6" height="25" fill="#f2c48c" stroke="#c08040" strokeWidth="1" />
          <path d="M14 8v2M17 8v3M20 8v2M23 8v3M26 8v2M7 15h2M7 18h3M7 21h2M7 24h3" stroke="#b87838" strokeWidth=".8" />
        </svg>
        <svg className="ml-[24px] h-[32px] w-[32px]" viewBox="0 0 32 32">
          <path d="M0 0H7L0 7ZM32 0H25L32 7ZM0 30V23L7 30ZM32 30V23L25 30Z" fill="#4b8a3a" />
          <rect x="5" y="7" width="22" height="16.500" rx="1.500" fill="#f1f1f1" stroke="#414141" strokeWidth="2" />
          <rect x="5" y="6" width="22" height="3.500" fill="#414141" />
        </svg>
        <svg className="ml-[26px] h-[32px] w-[30px]" viewBox="0 0 30 32" fill="#3683bb">
          <path d="M1 12L7 7V10.500H14V13.500H7V17Z" />
          <path d="M28 19L22 14V17.500H15V20.500H22V24Z" />
        </svg>
        <svg className="ml-[24px] h-[34px] w-[32px]" viewBox="0 0 32 34">
          <circle cx="16" cy="16.500" r="15" fill="#fff" stroke="#8e8e8e" strokeWidth="1.300" />
          <path d="M10 11.500Q8 11.500 8 13.500V15Q8 16.500 6.500 16.500Q8 16.500 8 18V19.500Q8 21.500 10 21.500M22 11.500Q24 11.500 24 13.500V15Q24 16.500 25.500 16.500Q24 16.500 24 18V19.500Q24 21.500 22 21.500" fill="none" stroke="#777" strokeWidth="1.200" />
          <path d="M12 18h1.500M15.500 18h1.500M19 18h1.500" stroke="#777" strokeWidth="1.500" />
        </svg>
      </div>
      <svg className="ml-auto mr-[32px] mt-[22px] h-[28px] w-[8px]" viewBox="0 0 8 28" fill="#555">
        <circle cx="4" cy="4" r="3.200" />
        <circle cx="4" cy="14" r="3.200" />
        <circle cx="4" cy="24" r="3.200" />
      </svg>
    </div>
  );
}

/* ---------- Page ---------- */

function Page() {
  return (
    <div className="flex h-[1506px] shrink-0 flex-col bg-black pt-[28px] font-['Liberation_Sans',sans-serif] text-[28px] leading-[40px] text-black">
      <ul className="ml-[1500px] flex w-[1050px] flex-col gap-[30px] [-webkit-text-stroke:0.300px_black]">
        {burgers.map((b) => (
          <li key={b} className="h-[100px] bg-white px-[30px] pt-[31px]">{b}</li>
        ))}
      </ul>
      <h1 className="mt-[71px] pl-[2px] text-center text-[60px] leading-[66px] tracking-[0.400px] text-[#439279] [-webkit-text-stroke:0.500px_#439279]">Add A Burger!</h1>
      <form className="mx-[352px] mt-[51px] flex h-[312px] shrink-0 flex-col items-center bg-[#eceef0] pt-[51px]">
        <label htmlFor="burger" className="[-webkit-text-stroke:0.300px_black]">Enter a burger you want to order and click the Submit Order button.</label>
        <input id="burger" className="mt-[20px] h-[50px] w-[302px] border border-[#b9b9b9] bg-white ring-1 ring-white" />
        <button type="button" className="mt-[51px] h-[50px] w-[200px] rounded-[24px] border-2 border-[#3a6da6] bg-[#427ab4] leading-[44px] text-white [-webkit-text-stroke:0.800px_white]">
          Submit Order
        </button>
      </form>
      <footer className="mt-[92px] flex h-[136px] flex-col border-t-2 border-[#eee]">
        <p className="mt-[41px] text-center text-black [text-shadow:2px_2px_0_#fff]">copyright © Eat-Da-Burger App 2018</p>
        <div className="mt-auto h-[34px] shrink-0 bg-linear-to-r from-[#121212] via-[#020202] to-[#0d0d0d]" />
      </footer>
    </div>
  );
}

export default function App() {
  return (
    <div className="flex h-[1800px] w-[2880px] flex-col overflow-hidden bg-black">
      <Defs />
      <MenuBar />
      <div className="h-[2px] shrink-0 bg-black" />
      <TabStrip />
      <Toolbar />
      <Page />
      <div className="h-[100px] shrink-0 bg-linear-to-r from-[#121212] via-black to-[#161616]">
        <Dock />
      </div>
    </div>
  );
}
